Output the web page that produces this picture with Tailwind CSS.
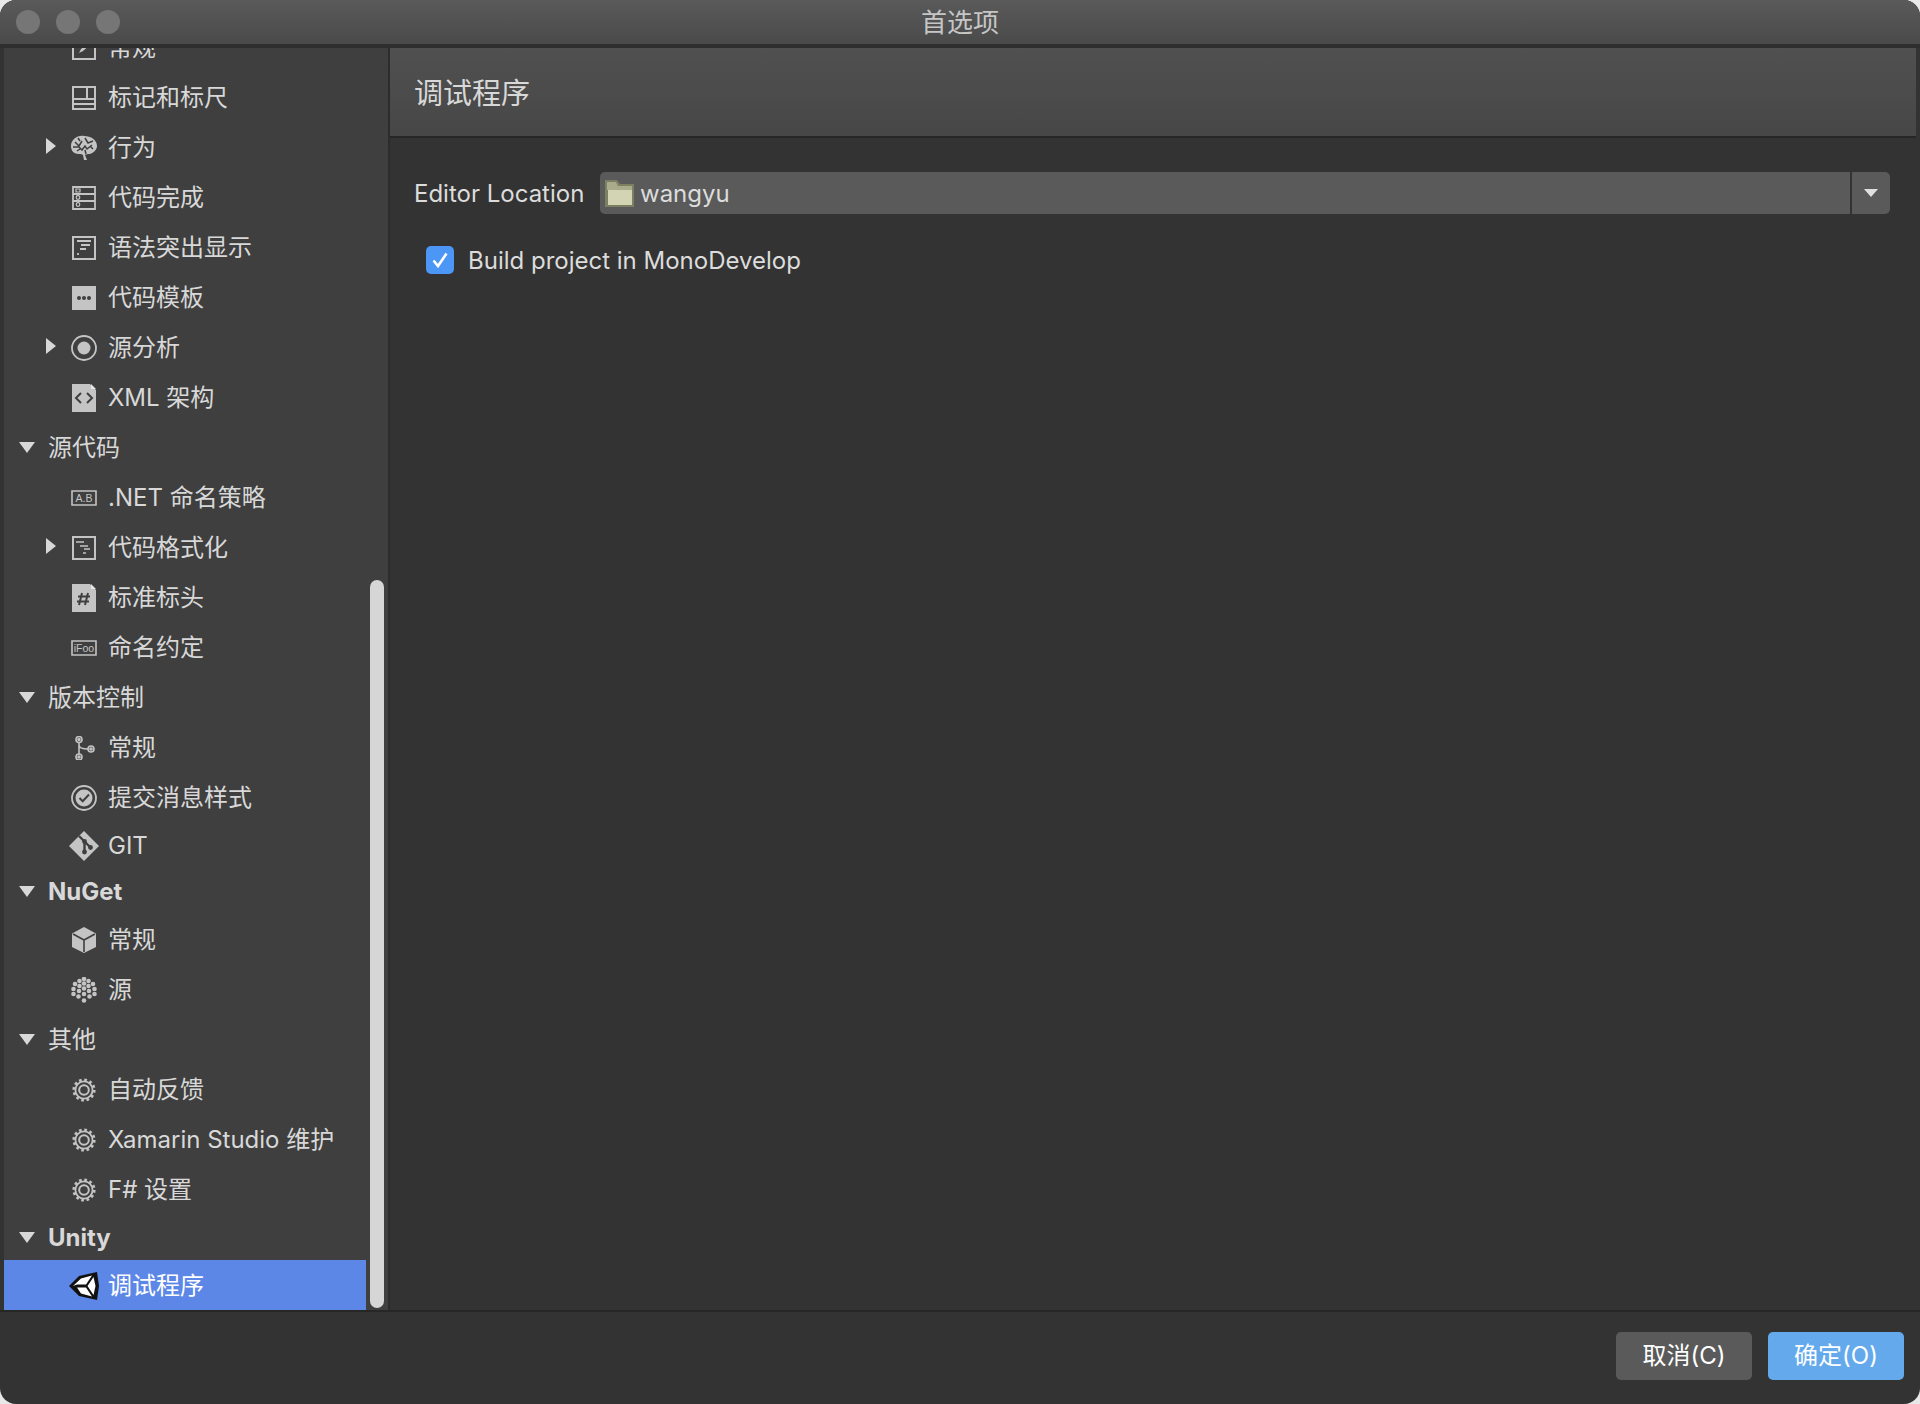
<!DOCTYPE html>
<html lang="zh-CN">
<head>
<meta charset="UTF-8">
<title>首选项</title>
<script src="https://cdn.jsdelivr.net/npm/@tailwindcss/browser@4"></script>
</head>
<body class="bg-[#e8e8e8] font-['Inter','Noto_Sans_CJK_SC',sans-serif] text-[24px] text-[#d8d8d8] antialiased">
<svg class="hidden">
  <defs>
    <symbol id="gear" viewBox="0 0 24 24">
      <circle cx="12" cy="12" r="8.600" fill="none" stroke="#c4c4c4" stroke-width="1.800"/>
      <circle cx="12" cy="12" r="4.800" fill="none" stroke="#c4c4c4" stroke-width="2"/>
      <circle cx="12" cy="12" r="10.200" fill="none" stroke="#c4c4c4" stroke-width="2.800" stroke-dasharray="2.670 2.670"/>
    </symbol>
    <symbol id="tri-right" viewBox="0 0 10 16"><path d="M0 0L10 8L0 16Z" fill="#d8d8d8"/></symbol>
    <symbol id="tri-down" viewBox="0 0 16 11"><path d="M0 0H16L8 11Z" fill="#d8d8d8"/></symbol>
  </defs>
</svg>

<div class="flex h-[1404px] flex-col overflow-hidden rounded-[16px] bg-[#333333]">
  <!-- title bar -->
  <div class="relative flex h-[48px] shrink-0 items-center justify-center border-b-4 border-[#2e2e2e] bg-gradient-to-b from-[#5a5a5a] to-[#4a4a4a] pt-[2px] text-[26px] leading-none text-[#c6c6c6]">
    <div class="absolute top-[10px] left-[16px] flex gap-[16px]">
      <span class="size-[24px] rounded-full bg-[#767676]"></span>
      <span class="size-[24px] rounded-full bg-[#767676]"></span>
      <span class="size-[24px] rounded-full bg-[#767676]"></span>
    </div>
    首选项
  </div>

  <div class="flex h-[1262px] shrink-0 pl-[4px]">
    <!-- sidebar -->
    <div class="relative w-[384px] shrink-0 overflow-hidden bg-[#3f3f3f]">
      <div class="mt-[-26px] w-[362px]">
        <div class="flex h-[50px] items-center pt-[2px]">
          <svg class="ml-[68px] mr-[12px] size-[24px]" viewBox="0 0 24 24" fill="none" stroke="#c4c4c4" stroke-width="2"><path d="M1 1h22v22H1z"/><path d="M7 17l2-4 8-7 2 2-8 7z" fill="#c4c4c4" stroke="none"/></svg>
          <span>常规</span>
        </div>
        <div class="flex h-[50px] items-center pt-[2px]">
          <svg class="ml-[68px] mr-[12px] size-[24px]" viewBox="0 0 24 24" fill="none" stroke="#c4c4c4" stroke-width="2"><path d="M1 1h22v22H1zM1 13h22M1 18h22M15 1v12"/></svg>
          <span>标记和标尺</span>
        </div>
        <div class="flex h-[50px] items-center pt-[2px]">
          <svg class="ml-[42px] mt-[-4px] h-[16px] w-[10px]"><use href="#tri-right"/></svg>
          <svg class="ml-[15px] mr-[11px] size-[26px]" viewBox="0 0 26 26"><path d="M13 1C6 0 0 5 0 11c0 5 3 8 8 8 2 0 3 0 4 1l1 5h3l-2-5c1-1 3-1 5-1 3-1 7-4 7-8 0-6-6-10-13-10z" fill="#c4c4c4"/><path d="M4 7l4 4 3-5M2 12h6l3 3 3-4 2 3 5-4M14 3l3 5 5-2M7 3l2 3M6 16l3-2M14 15l1 4M19 11l3 3" fill="none" stroke="#3f3f3f" stroke-width="1.500"/></svg>
          <span>行为</span>
        </div>
        <div class="flex h-[50px] items-center pt-[2px]">
          <svg class="ml-[68px] mr-[12px] size-[24px]" viewBox="0 0 24 24" fill="none" stroke="#c4c4c4" stroke-width="1.800"><path d="M1 1h22v22H1zM1 8h22M1 15h22"/><path d="M4 3h4v3H4z" stroke-width="1.200"/><circle cx="6" cy="11.500" r="1.800" stroke-width="1.200"/><circle cx="6" cy="18.500" r="1.800" stroke-width="1.200"/></svg>
          <span>代码完成</span>
        </div>
        <div class="flex h-[50px] items-center pt-[2px]">
          <svg class="ml-[68px] mr-[12px] size-[24px]" viewBox="0 0 24 24" fill="none" stroke="#c4c4c4" stroke-width="2"><path d="M1 1h22v22H1z"/><path d="M5 5h14M9 9h9M8 13h6M6 17v2" stroke-width="1.800"/></svg>
          <span>语法突出显示</span>
        </div>
        <div class="flex h-[50px] items-center pt-[2px]">
          <svg class="ml-[68px] mr-[12px] size-[24px]" viewBox="0 0 24 24"><rect width="24" height="24" fill="#c4c4c4"/><circle cx="7" cy="12" r="2" fill="#3f3f3f"/><circle cx="12" cy="12" r="2" fill="#3f3f3f"/><circle cx="17" cy="12" r="2" fill="#3f3f3f"/></svg>
          <span>代码模板</span>
        </div>
        <div class="flex h-[50px] items-center pt-[2px]">
          <svg class="ml-[42px] mt-[-4px] h-[16px] w-[10px]"><use href="#tri-right"/></svg>
          <svg class="ml-[15px] mr-[11px] size-[26px]" viewBox="0 0 26 26" fill="none"><circle cx="13" cy="13" r="12" stroke="#c4c4c4" stroke-width="1.800"/><circle cx="13" cy="13" r="6.500" fill="#c4c4c4"/></svg>
          <span>源分析</span>
        </div>
        <div class="flex h-[50px] items-center pt-[2px]">
          <svg class="ml-[68px] mr-[12px] h-[28px] w-[24px]" viewBox="0 0 24 28"><path d="M0 0H18L24 6V28H0Z" fill="#c4c4c4"/><path d="M19 0l5 5h-5z" fill="#e6e6e6"/><path d="M9 9l-5 5 5 5M15 9l5 5-5 5" fill="none" stroke="#3f3f3f" stroke-width="2"/></svg>
          <span>XML 架构</span>
        </div>

        <div class="flex h-[50px] items-center pt-[2px]">
          <svg class="ml-[15px] mr-[13px] mt-[-2px] h-[11px] w-[16px]"><use href="#tri-down"/></svg>
          <span>源代码</span>
        </div>
        <div class="flex h-[50px] items-center pt-[2px]">
          <svg class="ml-[67px] mr-[11px] h-[16px] w-[26px]" viewBox="0 0 26 16" fill="none"><path d="M1 1h24v14H1z" stroke="#c4c4c4" stroke-width="1.600"/><text x="13" y="12" text-anchor="middle" font-family="Liberation Sans" font-size="10.500" fill="#c4c4c4">A.B</text></svg>
          <span>.NET 命名策略</span>
        </div>
        <div class="flex h-[50px] items-center pt-[2px]">
          <svg class="ml-[42px] mt-[-4px] h-[16px] w-[10px]"><use href="#tri-right"/></svg>
          <svg class="ml-[16px] mr-[12px] size-[24px]" viewBox="0 0 24 24" fill="none" stroke="#c4c4c4" stroke-width="2"><path d="M1 1h22v22H1z"/><path d="M4 6h8M8 10h8M12 13h6M11 17h3" stroke-width="1.500"/></svg>
          <span>代码格式化</span>
        </div>
        <div class="flex h-[50px] items-center pt-[2px]">
          <svg class="ml-[68px] mr-[12px] h-[28px] w-[24px]" viewBox="0 0 24 28"><path d="M0 0H18L24 6V28H0Z" fill="#c4c4c4"/><path d="M19 0l5 5h-5z" fill="#e6e6e6"/><path d="M10 9l-3 12M16 9l-3 12M6 12.500h12M5 17.500h12" fill="none" stroke="#3f3f3f" stroke-width="2"/></svg>
          <span>标准标头</span>
        </div>
        <div class="flex h-[50px] items-center pt-[2px]">
          <svg class="ml-[67px] mr-[11px] h-[16px] w-[26px]" viewBox="0 0 26 16" fill="none"><path d="M1 1h24v14H1z" stroke="#c4c4c4" stroke-width="1.600"/><text x="13" y="12" text-anchor="middle" font-family="Liberation Sans" font-size="10.500" fill="#c4c4c4">iFoo</text></svg>
          <span>命名约定</span>
        </div>

        <div class="flex h-[50px] items-center pt-[2px]">
          <svg class="ml-[15px] mr-[13px] mt-[-2px] h-[11px] w-[16px]"><use href="#tri-down"/></svg>
          <span>版本控制</span>
        </div>
        <div class="flex h-[50px] items-center pt-[2px]">
          <svg class="ml-[68px] mr-[12px] size-[24px]" viewBox="0 0 24 24" fill="none" stroke="#c4c4c4" stroke-width="1.600"><circle cx="7" cy="3.500" r="3"/><circle cx="7" cy="21" r="3"/><circle cx="19" cy="13" r="3"/><path d="M7 6.500v11.500M7 9c0 3 4 4 9 4"/><circle cx="7" cy="3.500" r="1" fill="#c4c4c4"/><circle cx="7" cy="21" r="1" fill="#c4c4c4"/><circle cx="19" cy="13" r="1" fill="#c4c4c4"/></svg>
          <span>常规</span>
        </div>
        <div class="flex h-[50px] items-center pt-[2px]">
          <svg class="ml-[67px] mr-[11px] size-[26px]" viewBox="0 0 26 26" fill="none"><circle cx="13" cy="13" r="12" stroke="#c4c4c4" stroke-width="1.800"/><circle cx="13" cy="13" r="8.500" fill="#c4c4c4"/><path d="M8.500 13l3.200 3.200L18 9.500" stroke="#3f3f3f" stroke-width="2"/></svg>
          <span>提交消息样式</span>
        </div>
        <div class="flex h-[46px] items-center pt-[2px]">
          <svg class="ml-[65px] mr-[9px] size-[30px]" viewBox="0 0 30 30"><path d="M15 0L30 15L15 30L0 15Z" fill="#c4c4c4"/><path d="M10 5l5.500 5.500M15.500 10.500v10M15.500 10.500l6 6" stroke="#3f3f3f" stroke-width="2.400" fill="none"/><circle cx="15.500" cy="10.500" r="2.400" fill="#3f3f3f"/><circle cx="15.500" cy="21" r="2.400" fill="#3f3f3f"/><circle cx="21.500" cy="16.500" r="2.400" fill="#3f3f3f"/></svg>
          <span>GIT</span>
        </div>

        <div class="flex h-[46px] items-center pt-[2px]">
          <svg class="ml-[15px] mr-[13px] mt-[-2px] h-[11px] w-[16px]"><use href="#tri-down"/></svg>
          <span class="font-bold">NuGet</span>
        </div>
        <div class="flex h-[50px] items-center pt-[2px]">
          <svg class="ml-[67px] mr-[11px] size-[26px]" viewBox="0 0 26 26"><path d="M13 0L25 6.500V20L13 26L1 20V6.500Z" fill="#c4c4c4"/><path d="M13 13V25M13 13L2 7M13 13L24 7" stroke="#3f3f3f" stroke-width="1.600" fill="none"/></svg>
          <span>常规</span>
        </div>
        <div class="flex h-[50px] items-center pt-[2px]">
          <svg class="ml-[67px] mr-[11px] size-[26px]" viewBox="0 0 26 26" fill="#c4c4c4"><circle cx="13" cy="2" r="2.300"/><circle cx="8.500" cy="4" r="2.300"/><circle cx="17.500" cy="4" r="2.300"/><circle cx="4" cy="7" r="2.300"/><circle cx="13" cy="6.500" r="2.300"/><circle cx="22" cy="7" r="2.300"/><circle cx="8.500" cy="9" r="2.300"/><circle cx="17.500" cy="9" r="2.300"/><circle cx="2.500" cy="12" r="2.300"/><circle cx="13" cy="11.500" r="2.300"/><circle cx="23.500" cy="12" r="2.300"/><circle cx="8" cy="14" r="2.300"/><circle cx="18" cy="14" r="2.300"/><circle cx="2.500" cy="17" r="2.300"/><circle cx="13" cy="17" r="2.300"/><circle cx="23.500" cy="17" r="2.300"/><circle cx="7.500" cy="19.500" r="2.300"/><circle cx="18.500" cy="19.500" r="2.300"/><circle cx="13" cy="23.500" r="2.300"/></svg>
          <span>源</span>
        </div>

        <div class="flex h-[50px] items-center pt-[2px]">
          <svg class="ml-[15px] mr-[13px] mt-[-2px] h-[11px] w-[16px]"><use href="#tri-down"/></svg>
          <span>其他</span>
        </div>
        <div class="flex h-[50px] items-center pt-[2px]">
          <svg class="ml-[68px] mr-[12px] size-[24px]"><use href="#gear"/></svg>
          <span>自动反馈</span>
        </div>
        <div class="flex h-[50px] items-center pt-[2px]">
          <svg class="ml-[68px] mr-[12px] size-[24px]"><use href="#gear"/></svg>
          <span>Xamarin Studio 维护</span>
        </div>
        <div class="flex h-[50px] items-center pt-[2px]">
          <svg class="ml-[68px] mr-[12px] size-[24px]"><use href="#gear"/></svg>
          <span>F# 设置</span>
        </div>

        <div class="flex h-[46px] items-center pt-[2px]">
          <svg class="ml-[15px] mr-[13px] mt-[-2px] h-[11px] w-[16px]"><use href="#tri-down"/></svg>
          <span class="font-bold">Unity</span>
        </div>
        <div class="flex h-[50px] items-center bg-[#5c87e6] pt-[2px] text-white">
          <svg class="ml-[65px] mr-[9px] h-[28px] w-[30px]" viewBox="0 0 30 28"><path d="M0 14L10 4L28 0L30 14L28 28L10 24Z" fill="#111"/><path d="M4 14L12 6.500L23 3.500L17 12.500H8ZM8 15.500H17L23 24.500L12 21.500ZM18.500 14L24.500 5L26.500 14L24.500 23Z" fill="#fff"/></svg>
          <span>调试程序</span>
        </div>
      </div>
      <!-- scrollbar -->
      <div class="absolute top-[532px] left-[366px] h-[728px] w-[14px] rounded-full bg-[#d6d6d6]"></div>
    </div>
    <div class="w-[2px] shrink-0 bg-[#2c2c2c]"></div>

    <!-- main panel -->
    <div class="min-w-0 flex-1">
      <div class="mr-[4px] flex h-[90px] items-center border-b-2 border-[#262626] bg-gradient-to-b from-[#505050] to-[#474747] pt-[3px] pl-[24px] text-[29px] text-[#d8d8d8]">调试程序</div>
      <div class="mt-[34px] flex h-[42px] items-center pr-[30px] pl-[24px] text-[#dcdcdc]">
        <span class="mt-[2px] w-[186px] shrink-0">Editor Location</span>
        <div class="flex h-full flex-1 items-center rounded-l-[5px] bg-[#5a5a5a] pl-[5px]">
          <svg class="mr-[5px] h-[27px] w-[30px]" viewBox="0 0 30 27"><path d="M0 0H12L15 4H29V27H0Z" fill="#7d7f63"/><path d="M2 2H11L13 6H27V10H2Z" fill="#a9ab8b"/><path d="M3 10H27V25H3Z" fill="#d2d4b4"/></svg>
          <span class="mt-[2px]">wangyu</span>
        </div>
        <div class="ml-[2px] flex h-full w-[38px] items-center justify-center rounded-r-[5px] bg-[#5a5a5a]">
          <svg class="h-[8px] w-[14px]" viewBox="0 0 14 8"><path d="M0 0H14L7 8Z" fill="#e0e0e0"/></svg>
        </div>
      </div>
      <div class="mt-[32px] flex h-[28px] items-center pl-[36px] text-[#dcdcdc]">
        <span class="mr-[14px] flex size-[28px] items-center justify-center rounded-[5px] bg-[#4c96f5]">
          <svg class="size-[18px]" viewBox="0 0 18 18" fill="none"><path d="M2.500 9.500L7 15L15.500 2.500" stroke="#fff" stroke-width="2.600"/></svg>
        </span>
        <span class="mt-[2px]">Build project in MonoDevelop</span>
      </div>
    </div>
  </div>

  <!-- footer -->
  <div class="flex flex-1 justify-end gap-[16px] border-t-2 border-[#262626] pt-[20px] pr-[16px] text-white">
    <button class="h-[48px] w-[136px] rounded-[5px] bg-[#5a5a5a]">取消(C)</button>
    <button class="h-[48px] w-[136px] rounded-[5px] bg-[#64a9ec]">确定(O)</button>
  </div>
</div>
</body>
</html>
